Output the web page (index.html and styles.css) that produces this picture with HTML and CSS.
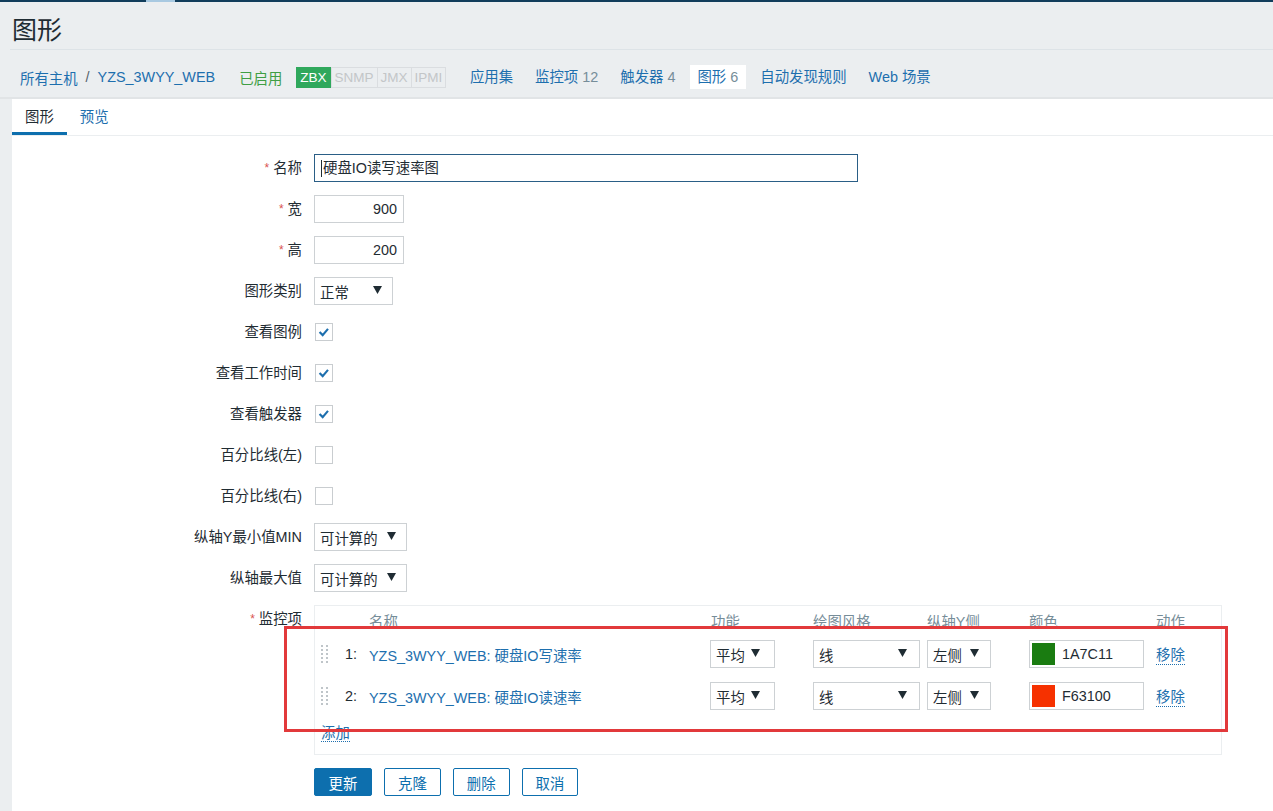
FILE: index.html
```html
<!DOCTYPE html>
<html lang="zh-CN">
<head>
<meta charset="utf-8">
<title>图形</title>
<link rel="stylesheet" href="styles.css">
</head>
<body>
<div class="topbar"><span class="topbar-mark"></span></div>
<header class="page-header"><h1>图形</h1></header>
<nav class="host-nav">
  <a class="link">所有主机</a><span class="sep">/</span><a class="link">YZS_3WYY_WEB</a>
  <span class="status-on">已启用</span>
  <span class="badges"><span class="badge zbx">ZBX</span><span class="badge">SNMP</span><span class="badge">JMX</span><span class="badge">IPMI</span></span>
  <a class="nav-item first">应用集</a>
  <a class="nav-item">监控项 <span class="count">12</span></a>
  <a class="nav-item">触发器 <span class="count">4</span></a>
  <span class="nav-item active">图形 <span class="count">6</span></span>
  <a class="nav-item">自动发现规则</a>
  <a class="nav-item">Web 场景</a>
</nav>
<main class="main">
  <div class="tabs">
    <span class="tab active">图形</span>
    <a class="tab">预览</a>
  </div>
  <form class="form">
    <div class="row">
      <label class="label"><span class="req">*</span>名称</label>
      <div class="input name-input focused"><span class="caret"></span>硬盘IO读写速率图</div>
    </div>
    <div class="row">
      <label class="label"><span class="req">*</span>宽</label>
      <div class="input num-input">900</div>
    </div>
    <div class="row">
      <label class="label"><span class="req">*</span>高</label>
      <div class="input num-input">200</div>
    </div>
    <div class="row">
      <label class="label">图形类别</label>
      <div class="select w79">正常<svg class="arrow" viewBox="0 0 9 8"><polygon points="0,0 9,0 4.5,8"/></svg></div>
    </div>
    <div class="row">
      <label class="label">查看图例</label>
      <span class="checkbox"><svg viewBox="0 0 18 18"><polyline points="4,9 7.5,12.5 13.5,5.5"/></svg></span>
    </div>
    <div class="row">
      <label class="label">查看工作时间</label>
      <span class="checkbox"><svg viewBox="0 0 18 18"><polyline points="4,9 7.5,12.5 13.5,5.5"/></svg></span>
    </div>
    <div class="row">
      <label class="label">查看触发器</label>
      <span class="checkbox"><svg viewBox="0 0 18 18"><polyline points="4,9 7.5,12.5 13.5,5.5"/></svg></span>
    </div>
    <div class="row">
      <label class="label">百分比线(左)</label>
      <span class="checkbox"></span>
    </div>
    <div class="row">
      <label class="label">百分比线(右)</label>
      <span class="checkbox"></span>
    </div>
    <div class="row">
      <label class="label">纵轴Y最小值MIN</label>
      <div class="select w93">可计算的<svg class="arrow" viewBox="0 0 9 8"><polygon points="0,0 9,0 4.5,8"/></svg></div>
    </div>
    <div class="row">
      <label class="label">纵轴最大值</label>
      <div class="select w93">可计算的<svg class="arrow" viewBox="0 0 9 8"><polygon points="0,0 9,0 4.5,8"/></svg></div>
    </div>
    <div class="row">
      <label class="label"><span class="req">*</span>监控项</label>
      <div class="items-box">
        <div class="grid head">
          <span></span><span></span><span>名称</span><span>功能</span><span>绘图风格</span><span>纵轴Y侧</span><span>颜色</span><span>动作</span>
        </div>
        <div class="grid item">
          <span class="handle"><svg viewBox="0 0 8 20"><g><rect x="0" y="1" width="2" height="2"/><rect x="5" y="1" width="2" height="2"/><rect x="0" y="5" width="2" height="2"/><rect x="5" y="5" width="2" height="2"/><rect x="0" y="9" width="2" height="2"/><rect x="5" y="9" width="2" height="2"/><rect x="0" y="13" width="2" height="2"/><rect x="5" y="13" width="2" height="2"/><rect x="0" y="17" width="2" height="2"/><rect x="5" y="17" width="2" height="2"/></g></svg></span>
          <span class="num">1:</span>
          <a class="link">YZS_3WYY_WEB: 硬盘IO写速率</a>
          <div class="select w65">平均<svg class="arrow" viewBox="0 0 9 8"><polygon points="0,0 9,0 4.5,8"/></svg></div>
          <div class="select w107">线<svg class="arrow" viewBox="0 0 9 8"><polygon points="0,0 9,0 4.5,8"/></svg></div>
          <div class="select w64">左侧<svg class="arrow" viewBox="0 0 9 8"><polygon points="0,0 9,0 4.5,8"/></svg></div>
          <div class="color-input"><span class="swatch green"></span>1A7C11</div>
          <a class="dotted">移除</a>
        </div>
        <div class="grid item">
          <span class="handle"><svg viewBox="0 0 8 20"><g><rect x="0" y="1" width="2" height="2"/><rect x="5" y="1" width="2" height="2"/><rect x="0" y="5" width="2" height="2"/><rect x="5" y="5" width="2" height="2"/><rect x="0" y="9" width="2" height="2"/><rect x="5" y="9" width="2" height="2"/><rect x="0" y="13" width="2" height="2"/><rect x="5" y="13" width="2" height="2"/><rect x="0" y="17" width="2" height="2"/><rect x="5" y="17" width="2" height="2"/></g></svg></span>
          <span class="num">2:</span>
          <a class="link">YZS_3WYY_WEB: 硬盘IO读速率</a>
          <div class="select w65">平均<svg class="arrow" viewBox="0 0 9 8"><polygon points="0,0 9,0 4.5,8"/></svg></div>
          <div class="select w107">线<svg class="arrow" viewBox="0 0 9 8"><polygon points="0,0 9,0 4.5,8"/></svg></div>
          <div class="select w64">左侧<svg class="arrow" viewBox="0 0 9 8"><polygon points="0,0 9,0 4.5,8"/></svg></div>
          <div class="color-input"><span class="swatch red"></span>F63100</div>
          <a class="dotted">移除</a>
        </div>
        <div class="add-row"><a class="dotted">添加</a></div>
      </div>
    </div>
    <div class="buttons">
      <button type="button" class="btn primary">更新</button>
      <button type="button" class="btn">克隆</button>
      <button type="button" class="btn">删除</button>
      <button type="button" class="btn">取消</button>
    </div>
  </form>
</main>
<div class="annotation"></div>
</body>
</html>
```

FILE: styles.css
```css
html, body {
  margin: 0;
  padding: 0;
}
body {
  background: #ebeef0;
  font-family: "Liberation Sans", Arial, "Noto Sans CJK SC", sans-serif;
  font-size: 14.4px;
  color: #1f2c33;
  position: relative;
  height: 811px;
  overflow: hidden;
}
a { text-decoration: none; cursor: pointer; }

.topbar {
  height: 2px;
  background: #113d5b;
  display: flex;
}
.topbar-mark {
  margin-left: 146px;
  width: 29px;
  height: 2px;
  background: #a8c9e1;
}

.page-header {
  box-sizing: border-box;
  height: 48px;
  padding: 9px 0 0 2px;
  margin-left: 10px;
  border-bottom: 1px solid #dde3e7;
}
.page-header h1 {
  margin: 0;
  font-size: 25px;
  font-weight: normal;
  line-height: 39px;
  color: #1f2c33;
}

.host-nav {
  box-sizing: border-box;
  height: 49px;
  padding: 15px 0 8px 20px;
  border-bottom: 2px solid #e1e4e6;
  display: flex;
  align-items: center;
  white-space: nowrap;
}
.host-nav .link, .items-box .link {
  color: #1d6fae;
}
.sep {
  color: #55626a;
  margin: 0 8px;
}
.status-on {
  color: #3f9e44;
  margin-left: 24px;
}
.badges {
  display: flex;
  margin-left: 14px;
  height: 21px;
  border: 1px solid #dadde0;
  box-sizing: border-box;
}
.badge {
  font-size: 13.5px;
  line-height: 19px;
  padding: 0 3px;
  color: #c3c6c8;
  border-left: 1px solid #dadde0;
}
.badge.zbx {
  background: #2fa85c;
  color: #fff;
  border-left: none;
  margin: -1px 0 -1px -1px;
  line-height: 21px;
  padding: 0 4px;
}
.nav-item {
  color: #1d6fae;
  height: 24px;
  line-height: 24px;
  padding: 0 7.5px;
  margin-left: 7px;
}
.nav-item.first { margin-left: 16px; }
.nav-item .count { color: #768d99; }
.nav-item.active {
  background: #fff;
  color: #1d6fae;
}

.main {
  background: #fff;
  margin-left: 12px;
  height: 712px;
}
.tabs {
  display: flex;
  height: 36px;
  border-bottom: 1px solid #ebeef0;
}
.tab {
  padding: 0 13px;
  line-height: 36px;
  color: #1d6fae;
}
.tab.active {
  color: #1f2c33;
  box-shadow: inset 0 -3px 0 #0d6fae;
}

.form {
  padding-top: 18px;
}
.row {
  display: flex;
  align-items: flex-start;
  margin-bottom: 13px;
  min-height: 28px;
}
.label {
  box-sizing: border-box;
  width: 290px;
  margin-right: 12px;
  text-align: right;
  line-height: 28px;
  white-space: nowrap;
}
.req {
  color: #d9534f;
  font-size: 12px;
  margin-right: 4px;
  vertical-align: 1px;
}

.input {
  box-sizing: border-box;
  height: 28px;
  border: 1px solid #cdd1d4;
  line-height: 26px;
  padding: 0 6px;
  background: #fff;
  white-space: nowrap;
}
.name-input {
  width: 544px;
  display: flex;
  align-items: center;
}
.name-input.focused {
  border-color: #2a5e86;
}
.caret {
  width: 1px;
  height: 17px;
  background: #1f2c33;
  margin-right: 1px;
}
.num-input {
  width: 90px;
  text-align: right;
}

.select {
  box-sizing: border-box;
  height: 28px;
  border: 1px solid #cdd1d4;
  padding: 0 10px 0 5px;
  display: flex;
  align-items: center;
  justify-content: space-between;
  white-space: nowrap;
  background: #fff;
}
.select .arrow {
  width: 9px;
  height: 8px;
  fill: #1f2c33;
  margin-top: -2px;
}
.w79 { width: 79px; }
.w93 { width: 93px; }
.w65 { width: 65px; padding-right: 14px; }
.w107 { width: 107px; padding-right: 12px; }
.w64 { width: 64px; padding-right: 11px; }

.checkbox {
  box-sizing: border-box;
  width: 18px;
  height: 18px;
  margin: 5px 0 0 1px;
  border: 1px solid #c9cdd0;
  background: #fff;
  display: block;
}
.checkbox svg {
  display: block;
  width: 16px;
  height: 16px;
  fill: none;
  stroke: #1d6fae;
  stroke-width: 2.4;
}

.items-box {
  box-sizing: border-box;
  width: 908px;
  border: 1px solid #ebeef0;
  padding: 5px 0 10px 6px;
}
.grid {
  display: grid;
  grid-template-columns: 24px 24px 341px 103px 114px 102px 127px auto;
  align-items: center;
}
.grid.head {
  line-height: 22px;
  color: #768d99;
}
.grid.head span:nth-child(4) { padding-left: 1px; }
.grid.item {
  padding: 7px 0;
}
.handle svg {
  display: block;
  width: 8px;
  height: 20px;
  fill: #bfc5c9;
}
.num {
  color: #1f2c33;
}
.color-input {
  box-sizing: border-box;
  width: 115px;
  height: 28px;
  border: 1px solid #cdd1d4;
  display: flex;
  align-items: center;
  padding-left: 2px;
}
.swatch {
  width: 23px;
  height: 22px;
  margin-right: 7px;
}
.swatch.green { background: #1a7c11; }
.swatch.red { background: #f63100; }
.dotted {
  color: #1d6fae;
  border-bottom: 1px dotted #1d6fae;
  justify-self: start;
  line-height: 17px;
}
.grid.item .dotted {
  margin-top: 3px;
}
.add-row {
  padding-top: 5px;
  line-height: 22px;
}

.buttons {
  display: flex;
  gap: 12px;
  padding-left: 302px;
  margin-top: 9px;
}
.btn {
  box-sizing: border-box;
  height: 28px;
  padding: 0 13px;
  font-family: inherit;
  font-size: 14.4px;
  background: #fff;
  color: #0d6fae;
  border: 1px solid #0d6fae;
  border-radius: 2px;
}
.btn.primary {
  background: #0d6fae;
  color: #fff;
  width: 58px;
}

.annotation {
  position: absolute;
  left: 284px;
  top: 626px;
  width: 944px;
  height: 106px;
  box-sizing: border-box;
  border: 3px solid #e2393b;
  pointer-events: none;
}
```
